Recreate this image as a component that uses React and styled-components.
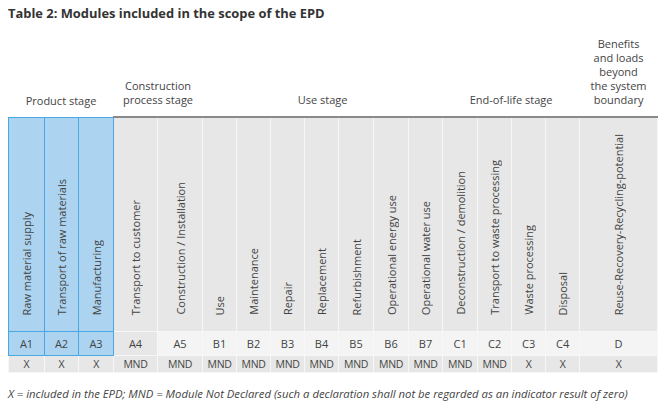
import React from 'react';
import styled, { createGlobalStyle } from 'styled-components';

const GlobalStyle = createGlobalStyle`
	body {
		margin: 0;
		background: #fff;
		font-family: "Open Sans", "Liberation Sans", sans-serif;
		color: #444;
	}
`;

const Page = styled.div`
	padding: 5px 8px 0 8px;
`;

const Title = styled.h3`
	margin: 0 0 16px 0;
	font-size: 12.9px;
	line-height: 16px;
	font-weight: 700;
	color: #333;
`;

const Table = styled.table`
	border-collapse: collapse;
	table-layout: fixed;
	width: 649px;
`;

const StageCell = styled.th`
	font-weight: 400;
	font-size: 11px;
	line-height: 14px;
	text-align: center;
	vertical-align: bottom;
	padding: 0 ${props => props.narrow ? '10px' : '2px'} 9px;
	color: #444;
`;

const NameCell = styled.td`
	height: 202px;
	padding: 0 0 11px 0;
	text-align: center;
	vertical-align: bottom;
	background: ${props => props.blue ? '#acd4f1' : '#e6e7e6'};
	border-top: ${props => props.blue ? '1px solid #49a7e2' : '2px solid #8a8a8a'};
	border-left: 1px solid ${props => props.blue ? '#49a7e2' : '#f7f7f7'};
	border-right: 1px solid ${props => props.blue ? '#49a7e2' : '#f7f7f7'};
	border-bottom: 1px solid ${props => props.blue ? '#49a7e2' : '#f7f7f7'};
`;

const Vertical = styled.span`
	display: inline-block;
	writing-mode: vertical-rl;
	transform: rotate(180deg);
	font-size: 11px;
	line-height: 13px;
	white-space: nowrap;
	color: #444;
`;

const CodeCell = styled.td`
	height: 23px;
	padding: 0;
	text-align: center;
	vertical-align: middle;
	font-size: 11px;
	color: #444;
	background: ${props => props.blue ? '#acd4f1' : props.dark ? '#e6e7e6' : '#f3f4f3'};
	border: 1px solid ${props => props.blue ? '#49a7e2' : '#f7f7f7'};
`;

const ValueCell = styled.td`
	height: 16px;
	padding: 0;
	text-align: center;
	vertical-align: middle;
	font-size: 10.5px;
	letter-spacing: -0.3px;
	line-height: 14px;
	color: #444;
	background: #e6e7e6;
	border: 1px solid #f7f7f7;
	border-top-color: ${props => props.blue ? '#49a7e2' : '#f7f7f7'};
`;

const Note = styled.p`
	margin: 13px 0 0 0;
	font-size: 11.3px;
	font-style: italic;
	color: #444;
`;

const modules = [
	{ code: 'A1', name: 'Raw material supply', value: 'X', width: 36, blue: true },
	{ code: 'A2', name: 'Transport of raw materials', value: 'X', width: 34, blue: true },
	{ code: 'A3', name: 'Manufacturing', value: 'X', width: 35, blue: true },
	{ code: 'A4', name: 'Transport to customer', value: 'MND', width: 44, dark: true },
	{ code: 'A5', name: 'Construction / Installation', value: 'MND', width: 45 },
	{ code: 'B1', name: 'Use', value: 'MND', width: 34 },
	{ code: 'B2', name: 'Maintenance', value: 'MND', width: 34 },
	{ code: 'B3', name: 'Repair', value: 'MND', width: 34 },
	{ code: 'B4', name: 'Replacement', value: 'MND', width: 34 },
	{ code: 'B5', name: 'Refurbishment', value: 'MND', width: 35 },
	{ code: 'B6', name: 'Operational energy use', value: 'MND', width: 35 },
	{ code: 'B7', name: 'Operational water use', value: 'MND', width: 34 },
	{ code: 'C1', name: 'Deconstruction / demolition', value: 'MND', width: 35 },
	{ code: 'C2', name: 'Transport to waste processing', value: 'MND', width: 34 },
	{ code: 'C3', name: 'Waste processing', value: 'X', width: 34 },
	{ code: 'C4', name: 'Disposal', value: 'X', width: 34 },
	{ code: 'D', name: 'Reuse-Recovery-Recycling-potential', value: 'X', width: 78 },
];

const stages = [
	{ label: 'Product stage', span: 3 },
	{ label: 'Construction process stage', span: 2 },
	{ label: 'Use stage', span: 7 },
	{ label: 'End-of-life stage', span: 4 },
	{ label: 'Benefits and loads beyond the system boundary', span: 1, narrow: true },
];

function App() {
	return (
		<Page>
			<GlobalStyle />
			<Title>Table 2: Modules included in the scope of the EPD</Title>
			<Table>
				<colgroup>
					{modules.map(m => <col key={m.code} style={{ width: m.width }} />)}
				</colgroup>
				<thead>
					<tr>
						{stages.map(s => (
							<StageCell key={s.label} colSpan={s.span} narrow={s.narrow}>{s.label}</StageCell>
						))}
					</tr>
				</thead>
				<tbody>
					<tr>
						{modules.map(m => (
							<NameCell key={m.code} blue={m.blue}>
								<Vertical>{m.name}</Vertical>
							</NameCell>
						))}
					</tr>
					<tr>
						{modules.map(m => (
							<CodeCell key={m.code} blue={m.blue} dark={m.dark}>{m.code}</CodeCell>
						))}
					</tr>
					<tr>
						{modules.map(m => (
							<ValueCell key={m.code} blue={m.blue}>{m.value}</ValueCell>
						))}
					</tr>
				</tbody>
			</Table>
			<Note>X = included in the EPD; MND = Module Not Declared (such a declaration shall not be regarded as an indicator result of zero)</Note>
		</Page>
	);
}

export default App;
